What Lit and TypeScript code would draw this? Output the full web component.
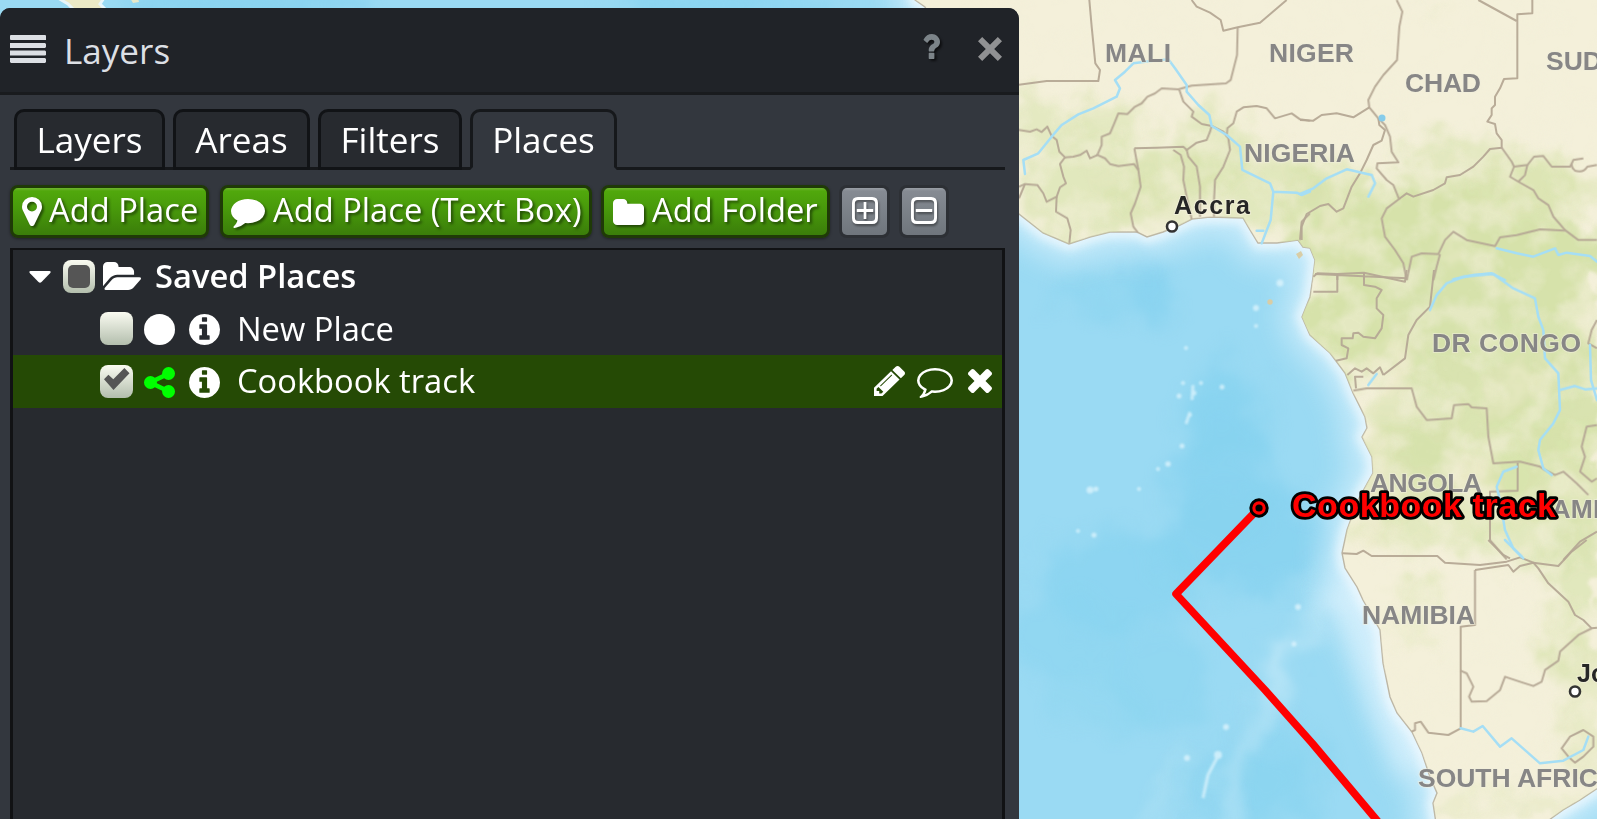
import { LitElement, html, svg, css } from "lit";
import { customElement, property, state } from "lit/decorators.js";

/* ---------- icons: [viewBox, path] ---------- */
const ICONS: Record<string, [string, string]> = {
  info: ["128 128 1536 1536", "M1152 1376v-160q0-14-9-23t-23-9h-96v-512q0-14-9-23t-23-9h-320q-14 0-23 9t-9 23v160q0 14 9 23t23 9h96v320h-96q-14 0-23 9t-9 23v160q0 14 9 23t23 9h448q14 0 23-9t9-23zm-128-896v-160q0-14-9-23t-23-9h-192q-14 0-23 9t-9 23v160q0 14 9 23t23 9h192q14 0 23-9t9-23zm640 416q0 209-103 385.500t-279.500 279.500-385.500 103-385.500-103-279.500-279.500-103-385.500 103-385.500 279.500-279.500 385.500-103 385.500 103 279.500 279.500 103 385.500z"],
  share: ["128 128 1536 1536", "M1344 1024q133 0 226.500 93.500t93.500 226.500-93.500 226.500-226.500 93.500-226.500-93.500-93.500-226.500q0-12 2-34l-360-180q-92 86-218 86-133 0-226.500-93.500t-93.500-226.500 93.500-226.500 226.500-93.500q126 0 218 86l360-180q-2-22-2-34 0-133 93.500-226.500t226.500-93.500 226.500 93.500 93.500 226.500-93.500 226.500-226.500 93.500q-126 0-218-86l-360 180q2 22 2 34t-2 34l360 180q92-86 218-86z"],
  circle: ["0 0 32 32", "M16 0a16 16 0 1 0 0 32a16 16 0 1 0 0-32z"],
  pencil: ["128 149 1515 1515", "M491 1536l91-91-235-235-91 91v107h128v128h107zm523-928q0-22-22-22-10 0-17 7l-542 542q-7 7-7 17 0 22 22 22 10 0 17-7l542-542q7-7 7-17zm-54-192l416 416-832 832h-416v-416zm683 96q0 53-37 90l-166 166-416-416 166-165q36-38 90-38 53 0 91 38l235 234q37 39 37 91z"],
  commentO: ["0 256 1792 1536", "M896 384q-204 0-381.500 69.500t-282 187.500-104.500 255q0 112 71.500 213.500t201.500 175.500l87 50-27 96q-24 91-70 172 152-63 275-171l43-38 57 6q69 8 130 8 204 0 381.500-69.500t282-187.500 104.500-255-104.500-255-282-187.500-381.500-69.500zm896 512q0 174-120 321.500t-326 233-450 85.500q-70 0-145-8-198 175-460 242-49 14-114 22h-5q-15 0-27-10.500t-16-27.500v-1q-3-4-.5-12t2-10 4.500-9.500l6-9 7-8.500 8-9q7-8 31-34.500t34.500-38 31-39.500 32.500-51 27-59 26-76q-157-89-247.500-220t-90.500-281q0-174 120-321.500t326-233 450-85.500 450 85.500 326 233 120 321.500z"],
  comment: ["0 256 1792 1536", "M1792 896q0 174-120 321.500t-326 233-450 85.500q-70 0-145-8-198 175-460 242-49 14-114 22-17 2-30.500-9t-17.500-29v-1q-3-4-.5-12t2-10 4.500-9.500l6-9 7-8.500 8-9q7-8 31-34.500t34.500-38 31-39.500 32.500-51 27-59 26-76q-157-89-247.500-220t-90.500-281q0-130 71-248.500t191-204.500 286-136.500 348-50.500q244 0 450 85.500t326 233 120 321.500z"],
  times: ["302 366 1188 1188", "M1490 1322q0 40-28 68l-136 136q-28 28-68 28t-68-28l-294-294-294 294q-28 28-68 28t-68-28l-136-136q-28-28-28-68t28-68l294-294-294-294q-28-28-28-68t28-68l136-136q28-28 68-28t68 28l294 294 294-294q28-28 68-28t68 28l136 136q28 28 28 68t-28 68l-294 294 294 294q28 28 28 68z"],
  folder: ["64 128 1664 1408", "M1728 608v704q0 92-66 158t-158 66h-1216q-92 0-158-66t-66-158v-960q0-92 66-158t158-66h320q92 0 158 66t66 158v32h672q92 0 158 66t66 158z"],
  folderOpen: ["0 128 1879 1408", "M1879 952q0 31-31 66l-336 396q-43 51-120.500 86.500t-143.500 35.500h-1088q-34 0-60.500-13t-26.500-43q0-31 31-66l336-396q43-51 120.500-86.500t143.500-35.500h1088q34 0 60.500 13t26.500 43zm-343-344v160h-832q-94 0-197 47.500t-164 119.500l-337 396-5 6q0-4-.5-12.500t-.5-12.500v-960q0-92 66-158t158-66h320q92 0 158 66t66 158v32h544q92 0 158 66t66 158z"],
  marker: ["384 128 1024 1536", "M1152 640q0-106-75-181t-181-75-181 75-75 181 75 181 181 75 181-75 75-181zm256 0q0 109-33 179l-364 774q-16 33-47.500 52t-67.500 19-67.500-19-46.500-52l-365-774q-33-70-33-179 0-212 150-362t362-150 362 150 150 362z"],
  question: ["389 256 1015 1280", "M1088 1256v240q0 16-12 28t-28 12h-240q-16 0-28-12t-12-28v-240q0-16 12-28t28-12h240q16 0 28 12t12 28zm316-600q0 54-15.500 101t-35 76.500-55 59.500-57.500 43.500-61 35.500q-41 23-68.500 65t-27.500 67q0 17-12 32.500t-28 15.500h-240q-15 0-25.500-18.500t-10.500-37.500v-45q0-83 65-156.500t143-108.500q59-27 84-56t25-76q0-42-46.500-74t-107.500-32q-65 0-108 29-35 25-107 115-13 16-31 16-12 0-25-8l-164-125q-13-10-15.500-25t5.500-28q160-266 464-266 80 0 161 31t146 83 106 127.500 41 158.500z"],
  close: ["0 0 24 24", "M4.200 0L12 7.800L19.800 0L24 4.200L16.200 12L24 19.800L19.800 24L12 16.200L4.200 24L0 19.800L7.800 12L0 4.200z"],
  bars: ["0 0 36 28", "M1 0H35Q36 0 36 1V5H1Q0 5 0 4V1Q0 0 1 0zM0 8H35L36 9V12L35 13H0zM0 15.500H35L36 16.500V20L35 20.500H0zM0 23H35L36 24V27L35 28H1L0 27z"],
  caret: ["0 0 22 12", "M1.500 0H20.500Q22.500 .5 21 2.300L12.500 11Q11 12.500 9.500 11L1 2.300Q-.5 .5 1.500 0z"],
  plus: ["0 0 27 27", "M6 0H21Q27 0 27 6V21Q27 27 21 27H6Q0 27 0 21V6Q0 0 6 0zM6.500 3Q3 3 3 6.500V20.500Q3 24 6.500 24H20.500Q24 24 24 20.500V6.500Q24 3 20.500 3zM12.100 5H14.900V12.100H22V14.900H14.900V22H12.100V14.900H5V12.100H12.100z"],
  minus: ["0 0 27 27", "M6 0H21Q27 0 27 6V21Q27 27 21 27H6Q0 27 0 21V6Q0 0 6 0zM6.500 3Q3 3 3 6.500V20.500Q3 24 6.500 24H20.500Q24 24 24 20.500V6.500Q24 3 20.500 3zM5 12.100H22V14.900H5z"],
  check: ["0 0 26 22", "M0 11.300L4.400 6.800L9.300 11.300L20.400 0L25.500 5.200L9.500 22z"],
};

@customElement("ui-icon")
export class UiIcon extends LitElement {
  @property() name = "info";
  static styles = css`
    :host { display: block; flex: none; }
    .glyph { display: block; width: 100%; height: 100%; fill: currentColor; fill-rule: evenodd; overflow: visible; }
  `;
  render() {
    const [box, d] = ICONS[this.name];
    return html`<svg class="glyph" viewBox=${box} preserveAspectRatio="none"><path d=${d}></path></svg>`;
  }
}

/* ---------- map ---------- */
const LAND =
  "M915 0L925 7L950 60L980 150L1019 214L1043 233L1069 244L1090 237L1110 232L1137 232L1147 237L1163 232L1180 225L1192 219L1210 217L1243 218L1250 230L1258 243L1277 243L1298 240L1303 247L1310 248L1315 260L1313 277L1310 297L1302 317L1310 335L1330 353L1345 373L1353 393L1365 417L1367 428L1362 437L1372 457L1373 473L1358 500L1347 530L1342 553L1345 568L1357 587L1363 600L1380 630L1383 663L1390 697L1397 713L1412 732L1422 753L1430 777L1437 793L1433 803L1437 830L1535 830L1563 810L1580 800L1610 780V-20H915z";

/* Boundary lines, grouped by map tile; each tile carries its own origin. */
const BORDERS: [number, number, string[]][] = [
  [1010, 0, [
    "M238 0L245 80L256 190L270 210L265 243L110 243L27 254",
    "M545 0L560 20L600 38L632 60L640 92L683 82L750 68L830 0",
    "M683 82L681 165L662 240L648 250L545 257L505 268L455 265L435 280L412 290L395 310L375 320L352 342L325 340L312 372L300 400L275 410L275 435L262 465L285 475L300 492L325 498L372 492L385 510",
    "M27 390L60 395L80 388L95 396L112 380L125 408L140 420L148 455L165 472L190 470L210 465L230 452L240 475L262 465",
    "M165 472L150 492L160 530L168 550L150 562L140 590L110 605L100 580L82 555L45 552L27 560",
    "M45 552L27 595", "M140 590L138 635L172 655L182 690L178 730",
    "M373 445L385 510L392 560L375 610L362 640L370 680L383 697",
    "M373 445L440 443L520 440L530 450L560 428L590 420L600 395L605 378L575 372L545 350L550 335L520 305L508 270",
    "M490 450L512 465L522 500L520 540L530 590L545 658", "M530 450L535 470L560 500L570 560L570 650",
    "M605 378L640 395L655 415L660 450L640 500L615 540L612 600L612 650",
    "M650 410L652 385L670 370L680 335L700 322L740 318L770 325L795 355L845 340L870 358L900 362",
    "M900 640L875 665L870 720"]],
  [1300, 0, [
    "M290 0L307 35L298 80L291 180L250 225L225 260L205 300L208 322L235 355L255 375L270 410L275 455L295 487L232 490L230 505L260 540L280 555L297 597L260 625L245 655L255 710L285 750L310 790L320 840",
    "M0 360L40 362L65 345L110 340L160 352L208 322", "M235 355L238 375L255 390L245 422L220 435L200 480L180 520L155 560L130 625L110 635L85 612L60 618L20 642L5 680L5 720",
    "M535 0L650 63", "M697 0L697 40L652 43L652 235L612 237L600 265L585 290L585 315L575 325L575 345L562 365L585 372L590 400L605 420L605 443L570 447L550 470L520 500L480 525L440 532L435 550L400 570L340 590L320 580L297 597",
    "M605 443L635 485L642 500L630 530L655 545L700 570L715 595L745 615L760 650L795 690L835 720L891 720",
    "M642 500L682 495L702 470L730 468L755 500L810 500L820 480L850 475M820 480Q808 500 825 512Q850 520 862 500L891 495",
    "M682 495L675 525L655 545", "M320 840L335 770L365 760L415 762L435 720L460 695L500 720L585 738L600 712L650 705L720 688L795 692",
    "M420 762L410 800L400 840", "M45 822L320 835M112 822V840M192 822V840"]],
  [1230, 270, [
    "M250 20L262 10L322 12L322 65L250 65", "M322 12L402 8L525 35L530 0", "M402 8L402 45L435 50L455 60L440 85L440 115L460 135L455 175L435 205L400 200L385 188L370 190L368 205L335 205L335 225L355 235L350 265L318 272",
    "M352 315L375 295L395 305L410 295L430 310L450 292L460 315",
    "M612 0L600 110L560 150L535 195L525 265L460 315", "M378 355L375 320L400 320",
    "M370 362L410 355L545 355L560 410L590 450L665 445L672 405L715 402L725 412L770 415L775 500L790 580L870 575L930 590L945 600L975 615L1000 605L1040 640L1075 675",
    "M863 578V662L780 665V810L810 845L830 868", "M1101 465L1070 470L1055 530L1065 560L1050 605L1085 635L1101 625",
    "M1101 150L1085 180L1075 220L1101 235", "M1101 785L1050 815L1000 870"]],
  [1150, 540, [
    "M577 40L620 42L640 32L665 48L862 48L885 68L990 75L1070 65L1110 52L1150 68L1165 85L1195 130L1255 185L1275 225L1300 240L1325 265L1341 263",
    "M1015 0L1060 45L1080 55", "M975 90L1075 75L1090 95L1110 78L1150 68L1225 78L1265 35L1310 0",
    "M975 90V255L932 260V565L895 585L835 578L812 545L795 550L795 570L785 575",
    "M932 392L950 400L970 440L957 470L965 485L1010 483L1050 450L1065 410L1110 425L1150 438L1175 425L1185 390L1225 362L1230 335L1285 285L1325 265",
    "M1235 625L1260 590L1300 570L1330 590L1330 620L1300 650L1275 668L1255 650z"]],
];
const RIVERS: [number, number, string[]][] = [
  [1010, 0, [
    "M45 522L40 480L85 460L125 410L155 375L205 343L250 325L320 290L330 265L315 240L345 215L370 190L430 182L475 178L495 205L530 255L530 275L565 315L598 345L605 378L650 405L690 440L697 510L780 550L790 575L782 660L755 730M740 692L760 692M790 575L860 578L875 585L900 575"]],
  [1300, 0, ["M0 582L40 565L80 535L140 508L160 512L185 518L215 525L225 550L205 590", "M590 745L650 760L700 770L765 745L775 765L800 758L870 768L891 785", "M460 838L520 825L575 820L615 840"]],
  [1230, 270, ["M600 120L620 75L650 40L700 20L790 12L850 55L915 85L925 140L940 180L945 265L985 310L990 420L970 460L930 510L925 540L940 595L965 615", "M990 360L1035 348L1065 358L1101 355", "M1080 225L1083 330L1101 390", "M415 345L440 312", "M860 590L820 605L800 650L810 690L825 780L850 835L880 865"]],
  [1150, 540, ["M1065 0L1115 50", "M932 565L970 575L998 558L1050 620L1085 595L1170 670L1240 662L1300 630L1315 590"]],
];
/* vegetation: cx, cy, rx, ry, opacity */
const GREEN: number[][] = [
  [1035, 125, 50, 28, .5], [1090, 190, 70, 50, .6], [1170, 185, 60, 35, .6], [1215, 150, 40, 40, .6], [1110, 130, 40, 28, .5],
  [1270, 190, 60, 40, .6], [1330, 210, 50, 45, .8], [1350, 250, 60, 35, 1], [1440, 150, 50, 16, .6], [1430, 215, 80, 40, 1],
  [1520, 190, 50, 40, .8], [1580, 190, 30, 20, .4], [1500, 270, 150, 55, 1], [1350, 320, 50, 50, 1], [1440, 300, 50, 60, .9], [1370, 355, 40, 25, .7],
  [1500, 350, 110, 55, .9], [1560, 400, 80, 60, .9], [1420, 420, 60, 40, .6], [1480, 450, 80, 50, .7], [1410, 470, 60, 45, .65], [1560, 470, 70, 50, .8],
  [1430, 525, 90, 24, .55], [1540, 540, 60, 30, .55], [1590, 560, 45, 60, .6], [1418, 590, 22, 12, .55], [1412, 630, 24, 10, .35], [1560, 630, 20, 30, .4], [1575, 660, 40, 22, .65], [1590, 730, 30, 50, .4], [1520, 808, 100, 15, .3], [1440, 10, 12, 8, .25],
];
/* bare patches inside the vegetation */
const SAND: number[][] = [
  [1395, 360, 18, 35, .6], [1530, 375, 28, 16, .55], [1470, 480, 20, 14, .8], [1325, 218, 14, 12, .7], [1340, 240, 16, 9, .6], [1455, 245, 14, 9, .7], [1390, 375, 12, 26, .6], [1590, 315, 9, 40, .7], [1160, 205, 22, 10, .5], [1370, 450, 10, 40, .5], [1375, 520, 15, 30, .6], [1500, 395, 22, 12, .5],
];
const DEEP: number[][] = [
  [1150, 285, 20, 36, .9], [1095, 298, 45, 14, .5], [1225, 400, 28, 42, .6], [1225, 480, 50, 70, .9], [1240, 540, 90, 55, .9], [1120, 580, 80, 50, .7], [1070, 640, 60, 40, .5], [1220, 420, 40, 50, .7],
  [1160, 680, 50, 50, .5], [1270, 765, 50, 50, .5], [1250, 790, 70, 40, .5], [1090, 700, 50, 30, .3], [250, 4, 120, 20, .9], [700, 4, 90, 20, .8], [810, 4, 30, 14, .5],
];
const SPECKS: number[][] = [
  [1280, 283, 3.5], [1256, 308, 3], [1256, 326, 2], [1186, 348, 2], [1183, 383, 2], [1201, 383, 2], [1222, 387, 2.5], [1179, 396, 2.500], [1194, 393, 2.500], [1190, 415, 2], [1182, 446, 2.5], [1168, 464, 2.8], [1158, 469, 2], [1090, 490, 3.500], [1096, 489, 2.5], [1139, 489, 2], [1094, 535, 2.6], [1078, 531, 2], [1294, 644, 2.500], [1298, 607, 3], [1226, 727, 3], [1218, 755, 4], [1187, 758, 3],
];
const LABELS: [string, number, number, number][] = [
  ["MALI", 1105, 62, 66], ["NIGER", 1269, 62, 85], ["CHAD", 1405, 92, 76], ["SUDAN", 1546, 70, 94], ["NIGERIA", 1244, 162, 111],
  ["DR CONGO", 1432, 352, 149], ["ANGOLA", 1370, 492, 112], ["ZAMBIA", 1535, 518, 104], ["NAMIBIA", 1362, 624, 113], ["SOUTH AFRICA", 1418, 787, 199],
];

@customElement("map-canvas")
export class MapCanvas extends LitElement {
  static styles = css`
    :host { display: block; overflow: hidden; }
    .map { display: block; width: 1597px; height: 819px; font-family: "Liberation Sans", Arial, sans-serif; font-weight: 700; }
    .map filter { color-interpolation-filters: sRGB; }
    .label { font-size: 26.500px; fill: #878686; stroke: #f1efdc; stroke-width: 2px; stroke-opacity: .55; paint-order: stroke; }
    .city { font-size: 25px; fill: #262626; stroke: #f6f3e2; stroke-width: 2px; stroke-opacity: .6; paint-order: stroke; }
    .border { fill: none; stroke: #b5a895; stroke-width: 6; stroke-linejoin: round; opacity: .95; }
    .river { fill: none; stroke: #a5def5; stroke-width: 7.5; stroke-linejoin: round; stroke-linecap: round; }
    .track { fill: none; stroke: #f00; stroke-width: 7.6; stroke-linejoin: round; }
    .name { font-size: 34px; fill: #f00; stroke: #000; stroke-width: 5.5px; stroke-linejoin: round; paint-order: stroke; }
  `;
  private blobs(list: number[][], fill: string) {
    return list.map(([x, y, rx, ry, o]) => svg`<ellipse cx=${x} cy=${y} rx=${rx} ry=${ry} fill=${fill} opacity=${o}></ellipse>`);
  }
  private lines(groups: [number, number, string[]][], cls: string) {
    return groups.map(([x, y, ds]) => svg`<g transform="translate(${x} ${y}) scale(.33333)">${ds.map((d) => svg`<path class=${cls} d=${d}></path>`)}</g>`);
  }
  render() {
    return html`<svg class="map" viewBox="0 0 1597 819">
      <defs>
        <filter id="deep" filterUnits="userSpaceOnUse" x="-100" y="-100" width="1800" height="1020">
          <feGaussianBlur stdDeviation="9" result="b"/>
          <feTurbulence type="fractalNoise" baseFrequency=".02" numOctaves="3" seed="11"/>
          <feDisplacementMap in="b" scale="50" xChannelSelector="R" yChannelSelector="G"/>
          <feGaussianBlur stdDeviation="2"/>
        </filter>
        <filter id="far" filterUnits="userSpaceOnUse" x="-100" y="-100" width="1800" height="1020"><feGaussianBlur stdDeviation="14"/></filter>
        <filter id="near" filterUnits="userSpaceOnUse" x="-100" y="-100" width="1800" height="1020"><feGaussianBlur stdDeviation="5"/></filter>
        <filter id="soft" filterUnits="userSpaceOnUse" x="-100" y="-100" width="1800" height="1020"><feGaussianBlur stdDeviation=".6"/></filter>
        <filter id="speck"><feGaussianBlur stdDeviation="1.300"/></filter>
        <filter id="veg" filterUnits="userSpaceOnUse" x="900" y="0" width="700" height="819">
          <feGaussianBlur stdDeviation="8" result="b"/>
          <feTurbulence type="fractalNoise" baseFrequency=".04" numOctaves="4" seed="7"/>
          <feDisplacementMap in="b" scale="50" xChannelSelector="R" yChannelSelector="G"/>
          <feGaussianBlur stdDeviation="1.500"/>
        </filter>
        <filter id="tex" filterUnits="userSpaceOnUse" x="900" y="0" width="700" height="819">
          <feTurbulence type="fractalNoise" baseFrequency=".03" numOctaves="4" seed="3" result="n"/>
          <feColorMatrix in="n" values="0 0 0 0 .955  0 0 0 0 .94  0 0 0 0 .855  0 3.500 0 0 -1.500"/>
          <feGaussianBlur stdDeviation="1.200"/>
          <feComposite in2="SourceGraphic" operator="in"/>
        </filter>
        <clipPath id="land"><path d=${LAND}></path></clipPath>
      </defs>
      <rect width="1597" height="819" fill="#9adaf3"></rect>
      <g filter="url(#deep)">${this.blobs(DEEP, "#88d3f0")}</g>
      <g filter="url(#deep)" fill="none" stroke="#c4e9f8" stroke-linecap="round">
        <path d="M1375 590L1320 610L1285 650L1280 690L1250 725L1235 775L1220 820" stroke-width="16" opacity=".6"></path>
        <path d="M1275 655L1278 690" stroke-width="16" opacity=".6"></path>
        <path d="M1190 765L1165 800L1150 815" stroke-width="10" opacity=".5"></path>
      </g>
      <path d="M1345 575L1400 690L1425 770" fill="none" stroke="#d6f0fc" stroke-width="60" opacity=".8" filter="url(#far)"></path>
      <path d=${LAND} fill="none" stroke="#d4effc" stroke-width="44" opacity=".7" filter="url(#far)"></path>
      <path d=${LAND} fill="none" stroke="#f0f9fe" stroke-width="12" opacity=".85" filter="url(#near)"></path>
      <g fill="#dff5fd" opacity=".75" filter="url(#speck)">
        ${SPECKS.map(([x, y, r]) => svg`<circle cx=${x} cy=${y} r=${r}></circle>`)}
        <path d="M1193 385L1192 400M1190 412L1186 424M1218 756L1208 775L1203 798" stroke="#dff5fd" stroke-width="3" fill="none"></path>
      </g>
      <g fill="#d9cda6" filter="url(#soft)"><circle cx="1270" cy="302" r="2.700"></circle><path d="M1296 254L1301 251L1303 255L1299 259z"></path></g>
      <g filter="url(#soft)">
        <path d="M58 -2L68 4L74 10H106L100 4L104 -2z" fill="#ebe9c6" stroke="#e9f6fa" stroke-width="3"></path>
        <path d="M130 -2L133 3L139 2L138 -2z" fill="#e6e8c8"></path>
        <path d=${LAND} fill="#f4f0da" stroke="#bdb7a6" stroke-width="1.4"></path>
      </g>
      <g clip-path="url(#land)">
        <g filter="url(#veg)" opacity=".95">${this.blobs(GREEN, "#d4e1a8")}${this.blobs(SAND, "#f0ebcf")}</g>
        <path d=${LAND} filter="url(#tex)" opacity=".5"></path>
      </g>
      <g filter="url(#soft)">
        ${this.lines(BORDERS, "border")}${this.lines(RIVERS, "river")}
        <circle cx="1382" cy="118" r="3.500" fill="#86ccea"></circle>
        ${LABELS.map(([t, x, y, w]) => svg`<text class="label" x=${x} y=${y} textLength=${w}>${t}</text>`)}
        <text class="city" x="1174" y="214" textLength="76">Accra</text>
        <text class="city" x="1577" y="682">Johannesburg</text>
        <g fill="#fff" stroke="#333" stroke-width="2.600"><circle cx="1172" cy="226.500" r="5"></circle><circle cx="1575" cy="691.500" r="5"></circle></g>
      </g>
      <path class="track" d="M1259 508L1176 594L1265 690L1312 743L1380 824"></path>
      <circle cx="1259" cy="508" r="8.200" fill="#f00" stroke="#000" stroke-width="3"></circle>
      <circle cx="1259" cy="508" r="3.600"></circle>
      <text class="name" x="1292" y="517" textLength="264">Cookbook track</text>
    </svg>`;
  }
}

/* ---------- application ---------- */
@customElement("app-root")
export class AppRoot extends LitElement {
  @state() private active = "Places";
  static styles = css`
    :host { display: grid; width: 1597px; height: 819px; overflow: hidden; font-family: "Open Sans", "Noto Sans", sans-serif; color: #fff; font-size: 35.100px; }
    map-canvas, .panel { grid-area: 1 / 1; }
    .panel { z-index: 1; margin-top: 8px; width: 1019px; height: 811px; box-sizing: border-box; border-radius: 10px 11px 0 0; background: #33373e; overflow: hidden; display: flex; flex-direction: column; }
    .head { flex: none; height: 84px; background: #202328; border-bottom: 3px solid #191b1e; display: flex; align-items: center; padding: 0 17px 0 10px; color: #dcdfe4; }
    .bars { width: 36px; height: 28px; margin-top: -2px; }
    .title { margin-left: 18px; flex: 1; line-height: 50px; }
    .help { width: 18px; height: 25px; color: #7c8489; margin: -8px 38.500px 0 0; filter: drop-shadow(2px 2px 1px #0009); }
    .close { width: 24px; height: 24px; color: #909193; margin-top: -2px; }
    .tabs { flex: none; height: 61px; margin: 14px 14px 0 10px; padding-left: 4px; display: flex; gap: 8px; box-shadow: inset 0 -3px #16181b; box-sizing: border-box; }
    .tab { box-sizing: border-box; height: 61px; border: 3px solid #111316; border-radius: 10px 10px 0 0; background: #272a2f; line-height: 55px; text-align: center; white-space: nowrap; }
    .tab.on { background: #33373e; border-color: #16181b; border-bottom-color: #33373e; }
    .tools { flex: none; display: flex; margin: 15px 0 0 10px; height: 53px; align-items: center; font-size: 32.700px; }
    .btn { box-sizing: border-box; height: 53px; border: 3px solid #1f3a07; border-radius: 8px; background: linear-gradient(#6fb52f 0, #51a80c 3px, #48990b 45%, #3b7d0a); display: flex; align-items: center; white-space: nowrap; box-shadow: 0 1px 3px #0006; line-height: 44px; text-shadow: 2px 2px 3px #0008; }
    .btn span { padding-bottom: 3px; }
    .btn ui-icon { filter: drop-shadow(2px 2px 1px #0007); }
    .sq { box-sizing: border-box; height: 47px; border-radius: 5px; background: linear-gradient(#9a9fa6 0, #868b93 3px, #70767d); box-shadow: 0 0 0 3px #2d3035; display: flex; align-items: center; justify-content: center; padding-bottom: 3px; }
    .sq ui-icon { width: 26px; height: 27px; filter: drop-shadow(1px 2px 1px #0006); }
    .list { flex: 1; margin: 10px 14px 0 10px; border: 3px solid #111214; border-top-width: 2px; border-bottom: 0; background: #272a2f; font-size: 32.700px; }
    .row { height: 52.600px; display: flex; align-items: center; white-space: nowrap; }
    .row.sel { background: #254a05; }
    .box { flex: none; width: 33px; height: 33px; border-radius: 8px; background: linear-gradient(#fafbf1, #b3bead); display: flex; align-items: center; justify-content: center; }
    .child .box { margin-left: 87px; }
    .mixed { width: 22px; height: 23px; border-radius: 5px; background: #555; }
    .check { width: 26px; height: 22px; color: #555; margin-top: -4px; }
    .caret { width: 22px; height: 12px; margin: 2px 12px 0 16px; }
    .root .box { width: 32px; }
    .folder { width: 38px; height: 28px; margin-left: 8px; }
    .kind { width: 31px; height: 31px; margin: 2px 0 0 11px; }
    .kind.green { color: #0f0; }
    .info { width: 31px; height: 31px; margin: 2px 0 0 14px; }
    .text { flex: 1; margin-left: 17px; line-height: 52px; }
    .strong { font-weight: 600; }
    .root .text { margin-left: 14px; }
    .pen { width: 31px; height: 30px; margin-right: 12px; }
    .note { width: 36px; height: 30px; margin: 3px 15px 0 0; }
    .del { width: 24px; height: 24px; margin-right: 10px; }
    .w1 { width: 199px; margin-right: 11px; padding-left: 9px; } .w1 ui-icon { width: 20px; height: 29px; margin-right: 7px; }
    .w2 { width: 372px; margin-right: 9px; padding-left: 8px; } .w2 ui-icon { width: 34px; height: 29px; margin-right: 8px; margin-top: 4px; }
    .w3 { width: 229px; margin-right: 12px; padding-left: 9px; } .w3 ui-icon { width: 31px; height: 26px; margin-right: 8px; }
    .s1 { width: 45px; margin-right: 15px; } .s2 { width: 44px; }
    .t1 { width: 151px; } .t2 { width: 137px; } .t3 { width: 144px; } .t4 { width: 147px; }
  `;
  render() {
    return html`
      <map-canvas></map-canvas>
      <section class="panel">
        <header class="head">
          <ui-icon class="bars" name="bars"></ui-icon><span class="title">Layers</span>
          <ui-icon class="help" name="question"></ui-icon><ui-icon class="close" name="close"></ui-icon>
        </header>
        <nav class="tabs">
          ${["Layers", "Areas", "Filters", "Places"].map((t, i) => html`<div class="tab t${i + 1} ${this.active === t ? "on" : ""}" @click=${() => (this.active = t)}><span>${t}</span></div>`)}
        </nav>
        <div class="tools">
          <div class="btn w1"><ui-icon name="marker"></ui-icon><span>Add Place</span></div>
          <div class="btn w2"><ui-icon name="comment"></ui-icon><span>Add Place (Text Box)</span></div>
          <div class="btn w3"><ui-icon name="folder"></ui-icon><span>Add Folder</span></div>
          <div class="sq s1"><ui-icon name="plus"></ui-icon></div>
          <div class="sq s2"><ui-icon name="minus"></ui-icon></div>
        </div>
        <div class="list">
          <div class="row root">
            <ui-icon class="caret" name="caret"></ui-icon><span class="box"><span class="mixed"></span></span>
            <ui-icon class="folder" name="folderOpen"></ui-icon><span class="text strong">Saved Places</span>
          </div>
          <div class="row child">
            <span class="box"></span><ui-icon class="kind" name="circle"></ui-icon><ui-icon class="info" name="info"></ui-icon><span class="text">New Place</span>
          </div>
          <div class="row child sel">
            <span class="box"><ui-icon class="check" name="check"></ui-icon></span><ui-icon class="kind green" name="share"></ui-icon><ui-icon class="info" name="info"></ui-icon><span class="text">Cookbook track</span>
            <ui-icon class="pen" name="pencil"></ui-icon><ui-icon class="note" name="commentO"></ui-icon><ui-icon class="del" name="times"></ui-icon>
          </div>
        </div>
      </section>`;
  }
}
